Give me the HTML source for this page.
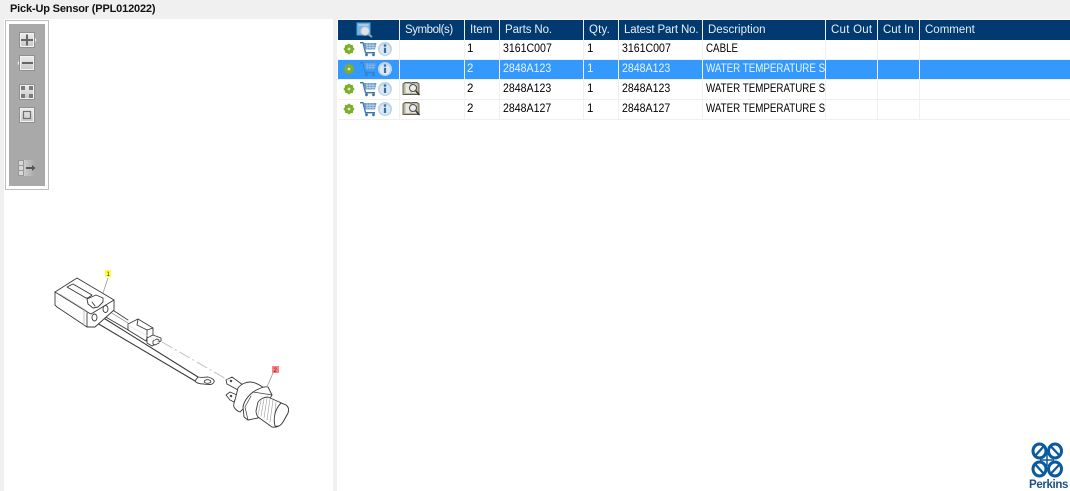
<!DOCTYPE html>
<html><head><meta charset="utf-8"><style>
html,body{margin:0;padding:0;background:#f0f0f0}
body{width:1070px;height:491px;overflow:hidden;position:relative;font-family:"Liberation Sans",sans-serif;font-size:11.500px;color:#000}
.a{position:absolute}
.t{position:absolute;white-space:nowrap;overflow:hidden;line-height:14px}
.h{color:#e8eef5;font-size:11.500px}
.n{transform:scaleX(.92);transform-origin:0 0}
.d{transform:scaleX(.85);transform-origin:0 0}
.s{color:#eaf4ff}
.b{position:absolute;width:14px;height:14px;background:linear-gradient(#ececec,#c6c6c6);border:1px solid #8f8f8f;border-radius:1px;box-shadow:inset 0 0 0 1px #f2f2f2}
.l{position:absolute;top:20px;width:1px;height:100px;background:#f0f0f0}
.r{position:absolute;left:338px;width:732px;height:1px;background:#f0f0f0}
</style></head><body>
<div class="t" style="left:10px;top:2px;font-weight:bold;font-size:11px;color:#111;letter-spacing:-.17px">Pick-Up Sensor (PPL012022)</div>
<div class="a" style="left:4px;top:19px;width:329px;height:472px;background:#fff"></div>
<div class="a" style="left:337px;top:19px;width:733px;height:472px;background:#fff"></div>
<div class="a" style="left:5px;top:20px;width:42px;height:168px;border:1px solid #bdbdbd;background:#fff"></div>
<div class="a" style="left:9px;top:24px;width:36px;height:162px;background:#a9a9a9"></div>
<div class="b" style="left:19px;top:32px"></div>
<div class="b" style="left:19px;top:55px"></div>
<div class="b" style="left:19px;top:84px"></div>
<div class="b" style="left:19px;top:107px"></div>
<svg class="a" style="left:0;top:0" width="340" height="190" viewBox="0 0 340 190">
<path d="M35 37.500l1.500 2.500-1.500 2.500zM19 60.500l-1.500 2.500 1.500 2.500z" fill="#eee"/>
<path d="M21 40h12M27 34.500v11M22 63h11" stroke="#666" stroke-width="2" fill="none"/>
<path d="M21 86h4v4h-4zM29 86h4v4h-4zM21 94h4v4h-4zM29 94h4v4h-4z" fill="#7a7a7a"/>
<rect x="23.500" y="111.500" width="7" height="7" fill="none" stroke="#707070" stroke-width="1.200"/>
<defs><linearGradient id="fd"><stop offset="0" stop-color="#ddd"/><stop offset="1" stop-color="#a9a9a9"/></linearGradient></defs>
<rect x="18" y="160" width="17" height="16" fill="url(#fd)"/>
<path d="M18.500 160.500h5v15h-5zM18.500 165.500h5M18.500 170.500h5" stroke="#999" fill="#d8d8d8"/>
<path d="M26 168h7" stroke="#555" stroke-width="2"/><path d="M32 165l3.500 3-3.500 3z" fill="#555"/>
</svg>
<!-- table -->
<div class="a" style="left:338px;top:20px;width:732px;height:20px;background:#003a70"></div>
<div class="a" style="left:338px;top:60px;width:732px;height:19px;background:#3399ff"></div>
<div class="r" style="top:59px"></div><div class="r" style="top:79px"></div><div class="r" style="top:99px"></div><div class="r" style="top:119px"></div>
<div class="l" style="left:399px"></div><div class="l" style="left:464px"></div><div class="l" style="left:499px"></div><div class="l" style="left:583px"></div><div class="l" style="left:618px"></div><div class="l" style="left:702px"></div><div class="l" style="left:825px"></div><div class="l" style="left:877px"></div><div class="l" style="left:919px"></div>
<div class="t h" style="left:405px;top:23px;letter-spacing:-.45px">Symbol(s)</div>
<div class="t h" style="left:470px;top:23px">Item</div>
<div class="t h" style="left:505px;top:23px;letter-spacing:-.1px">Parts No.</div>
<div class="t h" style="left:589px;top:23px;letter-spacing:.2px">Qty.</div>
<div class="t h" style="left:624px;top:23px;letter-spacing:-.15px">Latest Part No.</div>
<div class="t h" style="left:708px;top:23px">Description</div>
<div class="t h" style="left:831px;top:23px;letter-spacing:.25px">Cut Out</div>
<div class="t h" style="left:883px;top:23px">Cut In</div>
<div class="t h" style="left:925px;top:23px">Comment</div>

<div class="t" style="left:467px;top:42px">1</div><div class="t n" style="left:503px;top:42px">3161C007</div><div class="t" style="left:587px;top:42px">1</div><div class="t n" style="left:622px;top:42px">3161C007</div><div class="t d" style="left:706px;top:42px">CABLE</div>
<div class="t s" style="left:467px;top:62px">2</div><div class="t n s" style="left:503px;top:62px">2848A123</div><div class="t s" style="left:587px;top:62px">1</div><div class="t n s" style="left:622px;top:62px">2848A123</div><div class="t d s" style="left:706px;top:62px;width:140px">WATER TEMPERATURE SENDER</div>
<div class="t" style="left:467px;top:82px">2</div><div class="t n" style="left:503px;top:82px">2848A123</div><div class="t" style="left:587px;top:82px">1</div><div class="t n" style="left:622px;top:82px">2848A123</div><div class="t d" style="left:706px;top:82px;width:140px">WATER TEMPERATURE SENDER</div>
<div class="t" style="left:467px;top:102px">2</div><div class="t n" style="left:503px;top:102px">2848A127</div><div class="t" style="left:587px;top:102px">1</div><div class="t n" style="left:622px;top:102px">2848A127</div><div class="t d" style="left:706px;top:102px;width:140px">WATER TEMPERATURE SENDER</div>

<svg class="a" style="left:0;top:0" width="1070" height="491" viewBox="0 0 1070 491">
<defs>
<g id="gear"><circle r="3.300" fill="none" stroke="#7fae2c" stroke-width="2.800"/><path d="M0-5.300V5.300M-5.300 0H5.300M-3.700-3.700L3.700 3.700M-3.700 3.700L3.700-3.700" stroke="#7fae2c" stroke-width="1.800"/><circle r="1.400" fill="#dfe8c4"/></g>
<g id="cart"><path d="M0 .7h3l2.500 10h9.500" fill="none" stroke="#3a74ad" stroke-width="1.300"/><path d="M3.500 1h13l-1.500 6.500h-10z" fill="#6a9ccb"/><path d="M6 3.200h9.500M6.500 5.400h8.500M7 1v6.500M10 1v6.500M13 1v6.500" stroke="#d4e3f1" stroke-width=".6"/><circle cx="6.500" cy="12.800" r="1.400" fill="#3a74ad"/><circle cx="13.500" cy="12.800" r="1.400" fill="#3a74ad"/></g>
<g id="info"><circle r="7" fill="#bcd3e8"/><circle cy=".5" r="5.300" fill="#dbe8f4"/><path d="M0-1.200V4" stroke="#36709f" stroke-width="2.200"/><circle cy="-3.500" r="1.300" fill="#36709f"/></g>
<g id="book"><path d="M0 3l2-1.500h5l1 1 1-1h5l2 1.500v10.500h-16z" fill="#b8b5a4" stroke="#5e5a45" stroke-width=".9"/><path d="M2.500 3h5v9h-5z" fill="#e8e8e0"/><path d="M8.500 3h5v9h-5z" fill="#e8e8e0"/><circle cx="10" cy="7" r="3.500" fill="#ededed" stroke="#4a4a4a" stroke-width="1"/><path d="M12.700 9.700l3.800 4.300" stroke="#333" stroke-width="1.500"/></g>
</defs>
<use href="#gear" x="349" y="49"/><use href="#cart" x="360" y="42"/><use href="#info" x="385" y="49"/>
<use href="#gear" x="349" y="69"/><use href="#cart" x="360" y="62" opacity=".6"/><use href="#info" x="385" y="69"/>
<use href="#gear" x="349" y="89"/><use href="#cart" x="360" y="82"/><use href="#info" x="385" y="89"/><use href="#book" x="403" y="81"/>
<use href="#gear" x="349" y="109"/><use href="#cart" x="360" y="102"/><use href="#info" x="385" y="109"/><use href="#book" x="403" y="101"/>
<!-- header icon -->
<rect x="357" y="23" width="13" height="12" fill="#7fb2dc" stroke="#4fa3e0"/>
<path d="M358.500 25h10" stroke="#cfe2f3"/>
<circle cx="365" cy="31" r="4.200" fill="#dfe3e6" stroke="#b7c6d2"/><path d="M368 34l4 3" stroke="#8aa6bf" stroke-width="2"/>

<!-- drawing -->
<g fill="#fff" stroke="#3a3a3a" stroke-width=".9" stroke-linejoin="round" stroke-linecap="round">
<!-- cable to ring -->
<path d="M97 323L195 381M102 317L198 377" fill="none" stroke-width="1.100"/>
<path d="M198 377c4 1 7 0 10 0 4 1 7 3 6 5-1 3-6 3-10 2-4 0-8-1-9-3z"/>
<ellipse cx="207.500" cy="381.500" rx="3.300" ry="1.800"/>
<!-- wires to plug -->
<path d="M108 307L128 320M104 316L130 331" fill="none"/>
<path d="M110 312L128 323" stroke="#777" stroke-width=".6" fill="none"/>
<!-- plug -->
<path d="M128 324l10-5 15 9 0 7-6 3 -1 3-18-11z"/>
<path d="M147 330v8M138 319l-1 6 10 5 6-2" fill="none"/>
<path d="M147 338l6-3 8 3v3l-9 5-5-3z"/>
<path d="M153 341l4-2 2 1v3l-4 2-2-1z"/>
<!-- connector -->
<path d="M55 292v13l2 2 30 20h8l19-17v-10l-37-22z"/>
<path d="M55 292l34 21 2 1M91 314l23-14M87 327v-14" fill="none"/>
<path d="M84 310v16" stroke="#aaa" stroke-width=".7" fill="none"/>
<path d="M60 294l27 17" stroke="#bbb" stroke-width=".7" fill="none"/>
<path d="M67 287l6-3 19 11-4 3-2 0z"/>
<path d="M87 299l9-4 7 3 0 4-5 5-5 1-5-4z"/>
<path d="M92 302l3 4" fill="none"/>
<ellipse cx="94.500" cy="317.500" rx="2.500" ry="3.500"/><ellipse cx="105.500" cy="309" rx="2.500" ry="3.500"/>
<!-- sensor terminals -->
<path d="M226 380l6-3 11 8-5 5-11-6z"/>
<circle cx="231" cy="381" r=".8"/>
<path d="M226 395l4-3 7 3-3 7-4-2z"/>
<circle cx="231" cy="396" r=".8"/>
<!-- flange -->
<path d="M238 388c3-4 8-6 12-6 5 0 10 3 14 6l-24 24c-3-1-5-3-6-5-1-2 0-4 1-7z"/>
<path d="M243 407c1-6 5-11 10-15 5-3 11-6 15-5l4 8-14 23-10 2-4-3z"/>
<path d="M251 396l-6 11 3 13" fill="none" stroke-width=".7"/>
<path d="M253 392l19 3" fill="none" stroke-width=".7"/>
<!-- thread -->
<path d="M258 402c2-3 6-5 10-5l18 8c3 2 3 5 2 8l-5 9c-2 3-5 6-11 5l-14-10c-1-1-2-4-2-6z"/>
<path d="M261 400l-3 15M264 399l-3 17M267 398l-3 20M270 399l-3 21M273 400l-3 22M276 402l-2 21" stroke="#9a9a9a" stroke-width=".6" fill="none"/>
<path d="M281 403l5 2c3 2 3 5 2 8l-5 9c-2 3-4 5-8 4-2-8 0-17 6-23z" stroke-width=".9"/>
</g>
<path d="M162 342L228 380" stroke="#c2c2c2" stroke-width="1" stroke-dasharray="12 3 2 3" fill="none"/>
<path d="M160 343L128 325" stroke="#ddd" stroke-width=".7" fill="none"/>
<path d="M108 278l-5 15M273 373l-6 14" stroke="#999" stroke-width=".8" fill="none"/>
<rect x="105" y="270" width="6" height="7" fill="#ffff33"/>
<text x="106.500" y="276" font-size="6" font-family="Liberation Sans" fill="#333">1</text>
<rect x="272" y="366" width="7" height="7" fill="#ff8080"/>
<text x="273.500" y="372" font-size="6" font-family="Liberation Sans" fill="#333">2</text>

<!-- logo -->
<g fill="none" stroke="#0b5a9e" stroke-width="3">
<ellipse cx="1039.500" cy="451" rx="6.500" ry="7"/><ellipse cx="1055" cy="451" rx="6.500" ry="7"/><ellipse cx="1039.500" cy="469" rx="6.500" ry="7"/><ellipse cx="1055" cy="469" rx="6.500" ry="7"/>
<path d="M1035 456L1044 446M1050.500 446L1060 456M1035 464L1044 474M1050.500 474L1060 464" stroke-width="2.300"/>
<path d="M1040 460h14M1047 453v13" stroke-width="1.500"/>
</g>
<text x="1029" y="488" font-size="11.500" font-weight="bold" font-family="Liberation Sans" fill="#1a5288" letter-spacing="-.35">Perkins</text>
</svg>
</body></html>
